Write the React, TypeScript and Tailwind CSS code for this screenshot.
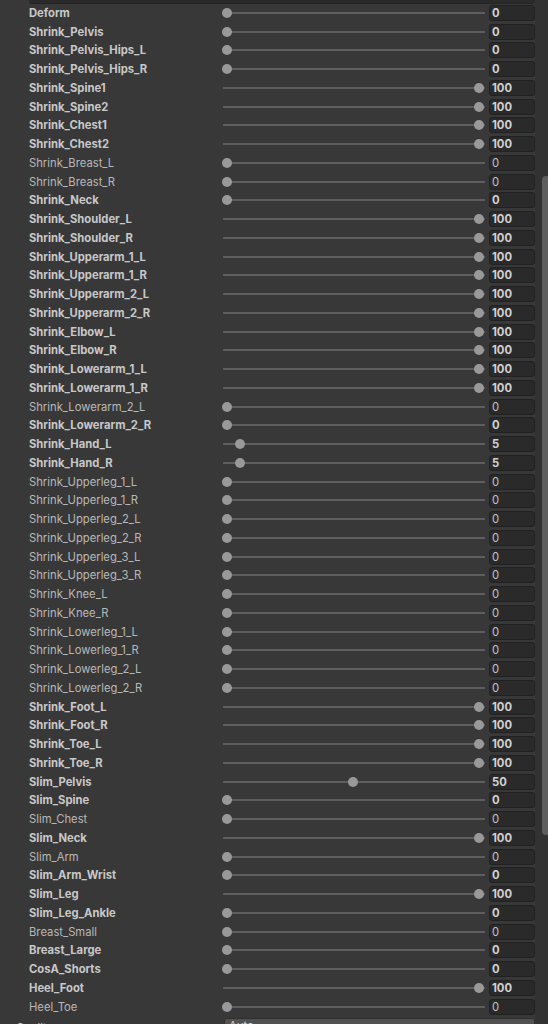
import React from 'react';

type Shape = { name: string; value: number; bold: boolean };

const shapes: Shape[] = [
  { name: 'Deform', value: 0, bold: true },
  { name: 'Shrink_Pelvis', value: 0, bold: true },
  { name: 'Shrink_Pelvis_Hips_L', value: 0, bold: true },
  { name: 'Shrink_Pelvis_Hips_R', value: 0, bold: true },
  { name: 'Shrink_Spine1', value: 100, bold: true },
  { name: 'Shrink_Spine2', value: 100, bold: true },
  { name: 'Shrink_Chest1', value: 100, bold: true },
  { name: 'Shrink_Chest2', value: 100, bold: true },
  { name: 'Shrink_Breast_L', value: 0, bold: false },
  { name: 'Shrink_Breast_R', value: 0, bold: false },
  { name: 'Shrink_Neck', value: 0, bold: true },
  { name: 'Shrink_Shoulder_L', value: 100, bold: true },
  { name: 'Shrink_Shoulder_R', value: 100, bold: true },
  { name: 'Shrink_Upperarm_1_L', value: 100, bold: true },
  { name: 'Shrink_Upperarm_1_R', value: 100, bold: true },
  { name: 'Shrink_Upperarm_2_L', value: 100, bold: true },
  { name: 'Shrink_Upperarm_2_R', value: 100, bold: true },
  { name: 'Shrink_Elbow_L', value: 100, bold: true },
  { name: 'Shrink_Elbow_R', value: 100, bold: true },
  { name: 'Shrink_Lowerarm_1_L', value: 100, bold: true },
  { name: 'Shrink_Lowerarm_1_R', value: 100, bold: true },
  { name: 'Shrink_Lowerarm_2_L', value: 0, bold: false },
  { name: 'Shrink_Lowerarm_2_R', value: 0, bold: true },
  { name: 'Shrink_Hand_L', value: 5, bold: true },
  { name: 'Shrink_Hand_R', value: 5, bold: true },
  { name: 'Shrink_Upperleg_1_L', value: 0, bold: false },
  { name: 'Shrink_Upperleg_1_R', value: 0, bold: false },
  { name: 'Shrink_Upperleg_2_L', value: 0, bold: false },
  { name: 'Shrink_Upperleg_2_R', value: 0, bold: false },
  { name: 'Shrink_Upperleg_3_L', value: 0, bold: false },
  { name: 'Shrink_Upperleg_3_R', value: 0, bold: false },
  { name: 'Shrink_Knee_L', value: 0, bold: false },
  { name: 'Shrink_Knee_R', value: 0, bold: false },
  { name: 'Shrink_Lowerleg_1_L', value: 0, bold: false },
  { name: 'Shrink_Lowerleg_1_R', value: 0, bold: false },
  { name: 'Shrink_Lowerleg_2_L', value: 0, bold: false },
  { name: 'Shrink_Lowerleg_2_R', value: 0, bold: false },
  { name: 'Shrink_Foot_L', value: 100, bold: true },
  { name: 'Shrink_Foot_R', value: 100, bold: true },
  { name: 'Shrink_Toe_L', value: 100, bold: true },
  { name: 'Shrink_Toe_R', value: 100, bold: true },
  { name: 'Slim_Pelvis', value: 50, bold: true },
  { name: 'Slim_Spine', value: 0, bold: true },
  { name: 'Slim_Chest', value: 0, bold: false },
  { name: 'Slim_Neck', value: 100, bold: true },
  { name: 'Slim_Arm', value: 0, bold: false },
  { name: 'Slim_Arm_Wrist', value: 0, bold: true },
  { name: 'Slim_Leg', value: 100, bold: true },
  { name: 'Slim_Leg_Ankle', value: 0, bold: true },
  { name: 'Breast_Small', value: 0, bold: false },
  { name: 'Breast_Large', value: 0, bold: true },
  { name: 'CosA_Shorts', value: 0, bold: true },
  { name: 'Heel_Foot', value: 100, bold: true },
  { name: 'Heel_Toe', value: 0, bold: false },
];

function Slider({ value }: { value: number }) {
  return (
    <div className="relative h-full w-[262.5px]">
      <div className="absolute left-[1px] right-0 top-1/2 h-[2px] -translate-y-1/2 bg-[#5e5e5e]" />
      <div
        className="absolute top-1/2 h-[10px] w-[10px] -translate-y-1/2 rounded-full bg-[#999999]"
        style={{ left: `${(value / 100) * 252}px` }}
      />
    </div>
  );
}

function ShapeRow({ shape }: { shape: Shape }) {
  const weight = shape.bold ? 'font-bold text-[#c8c8c8]' : 'font-normal text-[#b8b8b8]';
  return (
    <div className="flex h-[18.75px] shrink-0 items-center">
      <div className={`w-[222px] whitespace-nowrap pl-[29px] text-[11.25px] leading-[14px] ${weight}`}>{shape.name}</div>
      <Slider value={shape.value} />
      <div className="ml-[4.5px] flex h-[16px] w-[46px] items-center rounded-[3px] border border-[#212121] bg-[#2a2a2a] pl-[2px]">
        <span className={`text-[11.25px] leading-[14px] ${shape.bold ? 'font-bold text-[#d2d2d2]' : 'font-normal text-[#c4c4c4]'}`}>
          {shape.value}
        </span>
      </div>
    </div>
  );
}

export default function App() {
  return (
    <div className="flex h-[1024px] w-[548px] overflow-hidden bg-[#383838]" style={{ fontFamily: 'Inter, "Noto Sans", sans-serif' }}>
      <div className="flex w-[535px] shrink-0 flex-col">
        <div className="ml-[29px] h-[3.6px] shrink-0 rounded-b-[3px] border-b border-[#232323] bg-[#2a2a2a]" />
        {shapes.map((s) => (
          <ShapeRow key={s.name} shape={s} />
        ))}
        <div className="mt-[1.6px] flex h-[18.75px] shrink-0 items-start">
          <div className="w-[224px] pl-[16px] pt-[3px] text-[11.25px] leading-[14px] text-[#c4c4c4]">Quality</div>
          <div className="flex h-[16px] flex-1 items-center rounded-[3px] border border-[#303030] bg-[#515151] pl-[4px]">
            <span className="text-[11.25px] leading-[14px] text-[#d2d2d2]">Auto</span>
          </div>
        </div>
      </div>
      <div className="flex w-[13px] shrink-0 flex-col bg-[#323232]">
        <div className="ml-[6.5px] mt-[176px] h-[659px] w-[6.5px] shrink-0 rounded-l-[4px] bg-[#5d5d5d]" />
      </div>
    </div>
  );
}
